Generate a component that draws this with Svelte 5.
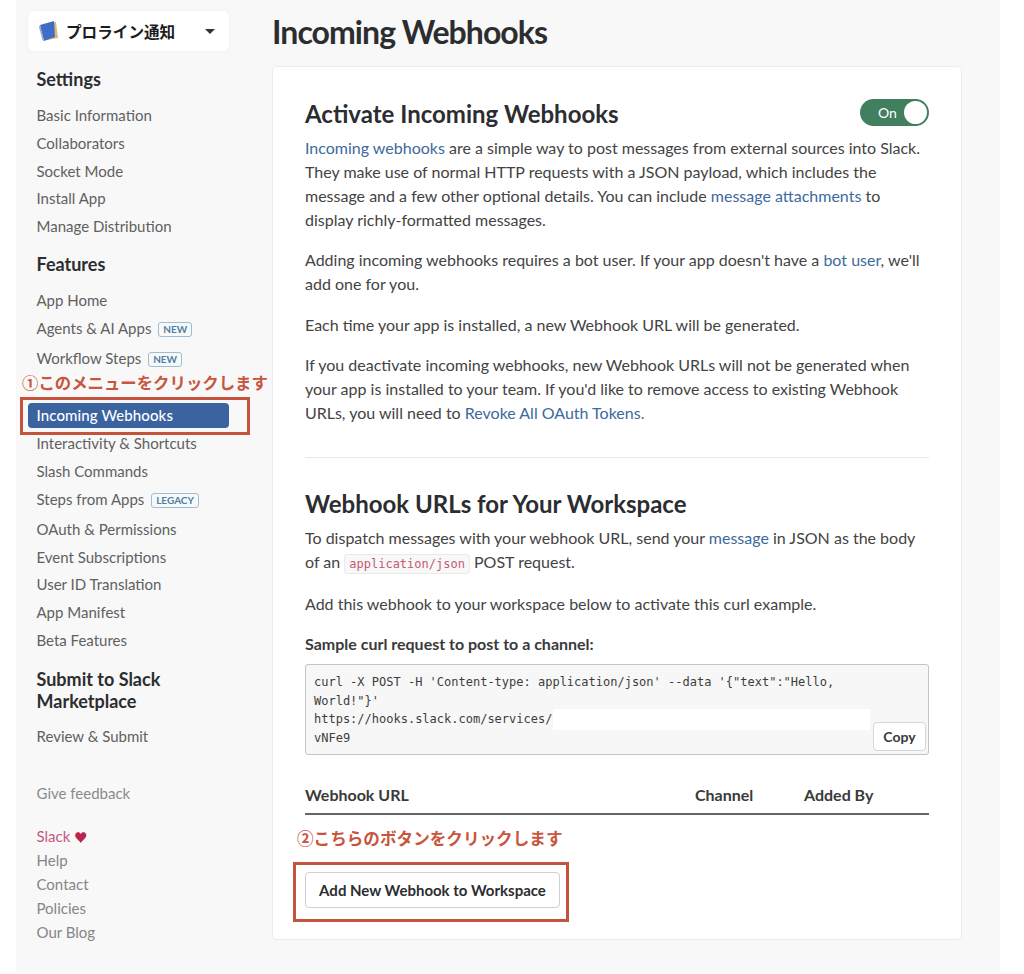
<script>
  const settings = ["Basic Information", "Collaborators", "Socket Mode", "Install App", "Manage Distribution"];
  const footer = ["Help", "Contact", "Policies", "Our Blog"];
</script>

<div class="page">
  <aside class="sidebar">
    <div class="switcher">
      <svg class="app-icon" width="24" height="24" viewBox="0 0 24 24">
        <path d="M7 6 L19 3 L21 19 L10 21 Z" fill="#d9b878" />
        <path d="M3 6 L17 2 L18 18 L7 22 Z" fill="#3f6fc4" />
        <path d="M3 6 L7 22 L5.5 21 L2 8 Z" fill="#8fa6c8" />
      </svg>
      <span class="app-name">プロライン通知</span>
      <span class="caret"></span>
    </div>

    <h3 class="first">Settings</h3>
    <ul>
      {#each settings as item}
        <li>{item}</li>
      {/each}
    </ul>

    <h3>Features</h3>
    <ul>
      <li>App Home</li>
      <li>Agents &amp; AI Apps <span class="tag">NEW</span></li>
      <li class="gap">Workflow Steps <span class="tag">NEW</span></li>
      <li class="active">Incoming Webhooks</li>
      <li>Interactivity &amp; Shortcuts</li>
      <li>Slash Commands</li>
      <li>Steps from Apps <span class="tag">LEGACY</span></li>
      <li class="tall">OAuth &amp; Permissions</li>
      <li>Event Subscriptions</li>
      <li>User ID Translation</li>
      <li>App Manifest</li>
      <li>Beta Features</li>
    </ul>

    <h3 class="two-line">Submit to Slack Marketplace</h3>
    <ul>
      <li>Review &amp; Submit</li>
    </ul>

    <div class="feedback">Give feedback</div>
    <ul class="footer-links">
      <li class="slack">Slack <span class="heart">♥</span></li>
      {#each footer as item}
        <li>{item}</li>
      {/each}
    </ul>
  </aside>

  <main>
    <h1>Incoming Webhooks</h1>
    <section class="card">
      <div class="title-row">
        <h2>Activate Incoming Webhooks</h2>
        <div class="toggle"><span>On</span><i></i></div>
      </div>
      <p>
        <a href="#a">Incoming webhooks</a> are a simple way to post messages from external sources into Slack.
        They make use of normal HTTP requests with a JSON payload, which includes the
        message and a few other optional details. You can include <a href="#a">message attachments</a> to
        display richly-formatted messages.
      </p>
      <p class="wide-gap">Adding incoming webhooks requires a bot user. If your app doesn't have a <a href="#a">bot user</a>, we'll add one for you.</p>
      <p>Each time your app is installed, a new Webhook URL will be generated.</p>
      <p>
        If you deactivate incoming webhooks, new Webhook URLs will not be generated when
        your app is installed to your team. If you'd like to remove access to existing Webhook
        URLs, you will need to <a href="#a">Revoke All OAuth Tokens.</a>
      </p>

      <hr />

      <h2 class="second">Webhook URLs for Your Workspace</h2>
      <p>
        To dispatch messages with your webhook URL, send your <a href="#a">message</a> in JSON as the body
        of an <code>application/json</code> POST request.
      </p>
      <p>Add this webhook to your workspace below to activate this curl example.</p>
      <p class="label">Sample curl request to post to a channel:</p>

      <div class="code">
        <pre>curl -X POST -H 'Content-type: application/json' --data '&#123;"text":"Hello,
World!"&#125;'
https://hooks.slack.com/services/
vNFe9</pre>
        <div class="redact"></div>
        <button class="copy">Copy</button>
      </div>

      <div class="table-head">
        <span>Webhook URL</span>
        <span>Channel</span>
        <span>Added By</span>
      </div>

      <button class="add">Add New Webhook to Workspace</button>
    </section>
  </main>

  <!-- 説明用の注釈 -->
  <div class="note note-1">①このメニューをクリックします</div>
  <div class="box box-1"></div>
  <div class="note note-2">②こちらのボタンをクリックします</div>
  <div class="box box-2"></div>
</div>

<style>
  :global(body) {
    margin: 0;
    background: #fff;
    font-family: Lato, "Noto Sans CJK JP", sans-serif;
  }

  .page {
    position: relative;
    display: flex;
    box-sizing: border-box;
    width: 984px;
    height: 972px;
    margin-left: 16px;
    padding: 11px 38px 0 12px;
    background: #f8f8f8;
    color: #434343;
  }

  .sidebar {
    width: 201px;
    flex: none;
    margin-right: 43px;
  }

  .switcher {
    display: flex;
    align-items: center;
    box-sizing: border-box;
    height: 40px;
    padding: 0 13px 0 9px;
    background: #fff;
    border-radius: 5px;
    box-shadow: 0 0 2px rgba(0, 0, 0, 0.08);
  }

  .app-icon {
    margin-right: 5px;
  }

  .app-name {
    flex: 1;
    font-size: 15.6px;
    font-weight: 700;
    color: #1d1c1d;
  }

  .caret {
    width: 0;
    height: 0;
    margin-right: 1px;
    border: 5px solid transparent;
    border-top: 5px solid #333;
    border-bottom: 0;
  }

  h3 {
    margin: 10px 0 10px 8.5px;
    font-size: 18px;
    line-height: 26px;
    font-weight: 700;
    color: #2c2d30;
  }

  h3.first {
    margin-top: 15px;
    margin-bottom: 10px;
  }

  h3.two-line {
    margin: 13px 8.5px 11px 8.5px;
    line-height: 22px;
  }

  ul {
    margin: 0;
    padding: 0;
    list-style: none;
  }

  li {
    height: 27.8px;
    padding-left: 8.5px;
    font-size: 15px;
    line-height: 27.8px;
    color: #616061;
    white-space: nowrap;
  }

  li.gap {
    margin-top: 2px;
    margin-bottom: 31px;
  }

  li.tall {
    margin-top: 2px;
  }

  li.active {
    height: 25px;
    margin-bottom: 2px;
    line-height: 25px;
    background: #3a639f;
    border-radius: 4px;
    color: #fff;
    font-weight: 500;
    letter-spacing: 0.1px;
  }

  .tag {
    display: inline-block;
    margin-left: 3px;
    padding: 0 4px;
    border: 1px solid #9dbdd4;
    border-radius: 3px;
    font-size: 10px;
    line-height: 13px;
    font-weight: 700;
    color: #4b7fa8;
    vertical-align: 1px;
  }

  .feedback {
    margin: 31px 0 20px 8.5px;
    font-size: 15px;
    line-height: 22px;
    color: #8a8a8a;
  }

  .footer-links li {
    height: 24px;
    line-height: 24px;
    color: #868686;
  }

  .footer-links li.slack {
    color: #c0587f;
  }

  .heart {
    font-size: 13px;
    color: #b8264f;
  }

  main {
    width: 690px;
    flex: none;
  }

  h1 {
    margin: 0 0 14px;
    font-size: 32px;
    line-height: 41px;
    font-weight: 700;
    letter-spacing: -0.95px;
    color: #2c2d30;
  }

  .card {
    position: relative;
    box-sizing: border-box;
    height: 874px;
    padding: 31px 32px 0;
    background: #fff;
    border: 1px solid #ececec;
    border-radius: 5px;
  }

  .title-row {
    display: flex;
    align-items: flex-start;
    justify-content: space-between;
    height: 32px;
    margin-bottom: 6px;
  }

  h2 {
    margin: 0;
    font-size: 24px;
    line-height: 32px;
    font-weight: 700;
    color: #2c2d30;
  }

  h2.second {
    margin-bottom: 6px;
  }

  .toggle {
    display: flex;
    align-items: center;
    justify-content: space-between;
    box-sizing: border-box;
    width: 69px;
    height: 27px;
    margin-top: 1px;
    padding: 0 2px 0 18px;
    background: #41805f;
    border-radius: 14px;
    color: #fff;
    font-size: 14px;
  }

  .toggle i {
    width: 23px;
    height: 23px;
    background: #fff;
    border-radius: 50%;
  }

  p {
    margin: 0 0 16px;
    font-size: 16px;
    line-height: 24px;
    color: #434343;
  }

  p.wide-gap {
    margin-bottom: 17px;
  }

  a {
    color: #3c6a9e;
    text-decoration: none;
  }

  code {
    padding: 2px 4px;
    background: #f8f8f8;
    border: 1px solid #eaeaea;
    border-radius: 3px;
    font-family: "DejaVu Sans Mono", monospace;
    font-size: 12px;
    color: #c25a72;
  }

  hr {
    height: 1px;
    margin: 32px 0 30px;
    border: 0;
    background: #e8e8e8;
  }

  .label {
    margin-bottom: 8px;
    font-weight: 700;
    color: #3a3a3a;
  }

  .code {
    position: relative;
    box-sizing: border-box;
    height: 91px;
    padding: 8px 8px;
    background: #f7f7f7;
    border: 1px solid #c4c4c4;
    border-radius: 3px;
  }

  pre {
    margin: 0;
    font-family: "DejaVu Sans Mono", monospace;
    font-size: 12px;
    line-height: 18.6px;
    color: #3d3d3d;
  }

  .redact {
    position: absolute;
    left: 247px;
    top: 44px;
    width: 317px;
    height: 21px;
    background: #fff;
  }

  .copy {
    position: absolute;
    right: 2px;
    bottom: 3px;
    width: 53px;
    height: 29px;
    padding: 0;
    background: #fff;
    border: 1px solid #d6d6d6;
    border-radius: 4px;
    font-family: inherit;
    font-size: 14px;
    font-weight: 700;
    color: #3a3a3a;
  }

  .table-head {
    display: grid;
    grid-template-columns: 390px 109px 1fr;
    box-sizing: border-box;
    height: 60px;
    padding-top: 29px;
    border-bottom: 2px solid #666;
    font-size: 16px;
    line-height: 22px;
    font-weight: 700;
    color: #3a3a3a;
  }

  .add {
    display: block;
    width: 255px;
    height: 36px;
    margin-top: 57px;
    padding: 0;
    background: #fff;
    border: 1px solid #d0d0d0;
    border-radius: 4px;
    font-family: inherit;
    font-size: 15px;
    font-weight: 700;
    color: #2c2d30;
  }

  .note {
    position: absolute;
    font-family: "Noto Sans CJK JP", sans-serif;
    font-size: 16.4px;
    line-height: 22px;
    font-weight: 700;
    color: #c8553d;
    white-space: nowrap;
  }

  .note-1 {
    left: 6px;
    top: 371px;
  }

  .note-2 {
    left: 281px;
    top: 827px;
    font-size: 16.6px;
  }

  .box {
    position: absolute;
    box-sizing: border-box;
    border: 3px solid #c2543d;
  }

  .box-1 {
    left: 4px;
    top: 397px;
    width: 230px;
    height: 38px;
  }

  .box-2 {
    left: 277px;
    top: 862px;
    width: 276px;
    height: 60px;
  }
</style>
